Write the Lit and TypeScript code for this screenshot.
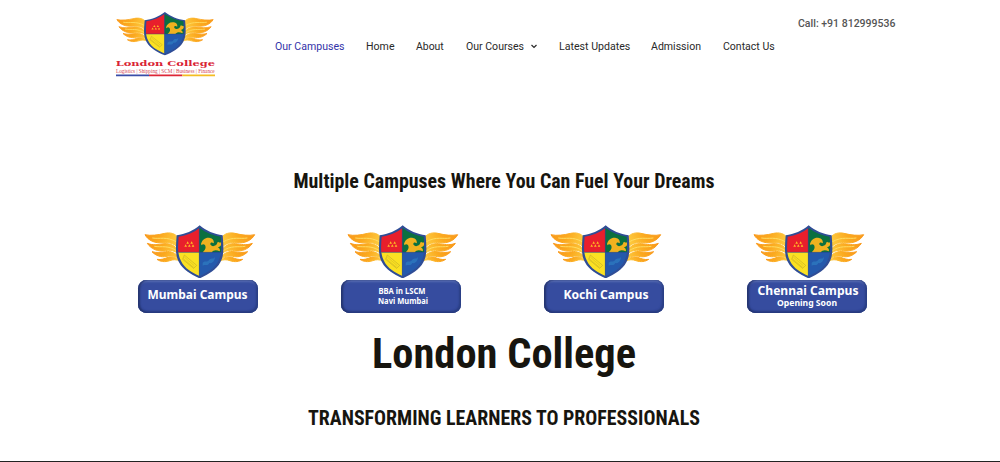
import { LitElement, html, css, svg } from "lit";
import { customElement, property } from "lit/decorators.js";

const wing = svg`
  <g fill="url(#gold)" stroke="url(#gold)" stroke-width="3" stroke-linejoin="round">
    <path d="M45 45 C62 49 84 46 104 41 C120 37 136 42 143 52 L144 84 C132 71 116 67 99 69 C75 72 54 62 45 45Z"/>
    <path d="M52 71 C70 78 86 74 102 72 C120 70 136 79 144 91 L146 104 C135 93 120 90 106 93 C84 97 63 88 52 71Z"/>
    <path d="M66 96 C80 100 93 98 107 96 C122 93 138 101 147 112 L149 119 C138 110 124 107 111 110 C93 114 77 108 66 96Z"/>
    <path d="M81 119 C94 121 103 117 114 113 C128 109 142 115 150 124 C138 119 130 119 119 123 C104 128 91 126 81 119Z"/>
  </g>
  <g fill="none" stroke="#ffdd62" stroke-width="3" stroke-linecap="round">
    <path d="M68 55 C90 59 108 49 139 66"/><path d="M74 80 C96 84 114 75 141 94"/>
  </g>`;

const emblem = svg`
  <defs>
    <linearGradient id="gold" x1="0" x2="1" y1="0" y2="0.2">
      <stop offset="0" stop-color="#f9981a"/><stop offset=".5" stop-color="#fba91f"/><stop offset="1" stop-color="#fdc83c"/>
    </linearGradient>
    <clipPath id="field"><path d="M209 25 C190 39 169 48 146 51 C144 78 141 101 153 124 C164 147 186 159 209 169 C232 159 254 147 265 124 C277 101 274 78 272 51 C249 48 228 39 209 25Z"/></clipPath>
  </defs>
  ${wing}
  <g transform="matrix(-1 0 0 1 419 0)">${wing}</g>
  <path fill="#2f4d96" d="M209 17 C190 33 165 44 140 47 C138 78 134 104 147 128 C159 151 184 165 209 176 C234 165 259 151 271 128 C284 104 280 78 278 47 C253 44 228 33 209 17Z"/>
  <g clip-path="url(#field)">
    <path fill="#e81f2c" d="M135 15H208V98H135Z"/>
    <path fill="#0b7040" d="M208 15H285V98H208Z"/>
    <path fill="#fbe122" d="M135 98H208V180H135Z"/>
    <path fill="#2459ac" d="M208 98H285V180H208Z"/>
    <path fill="#f1b21f" d="M213 73 C216 60 228 52 240 55 C249 57 253 64 251 71 C246 66 240 68 241 74 C243 80 251 81 257 77 C262 74 261 68 264 66 C267 69 272 69 277 68 C275 78 269 82 263 83 C269 86 271 90 269 95 C259 90 250 91 245 98 L218 98 C226 91 229 84 225 76 C221 72 217 73 215 77Z"/>
    <path fill="#ffba24" d="M163 81l4-7 4 7zm11 0l4-7 4 7zm11 0l4-7 4 7zm-16-9l4-7 4 7zm12 0l4-7 4 7z"/>
    <path fill="none" stroke="#b7a12a" stroke-width="1.5" d="M163 106L200 137L191 146L158 119Z"/>
    <path fill="none" stroke="#c1aa27" stroke-width="2.5" stroke-dasharray="2 2" d="M164 113L194 139M161 118L191 143"/>
    <path fill="#2b72bb" d="M218 130C225 119 232 132 239 119C246 113 250 120 255 112C254 124 247 132 238 130C233 141 227 133 218 138Z"/>
    <path fill="none" stroke="#26458b" stroke-width="1.5" d="M208 20V172M140 98H280"/>
  </g>`;

@customElement("college-emblem")
class CollegeEmblem extends LitElement {
  static styles = css`
    :host { display: block; }
    svg { display: block; width: 100%; height: 100%; }
  `;
  render() {
    return html`<svg viewBox="42 16 336 160" aria-hidden="true">${emblem}</svg>`;
  }
}

@customElement("campus-card")
class CampusCard extends LitElement {
  @property() name = "";
  @property() detail = "";
  @property() variant = "";
  static styles = css`
    :host { display: block; width: 120px; }
    college-emblem { width: 112px; height: 53.4px; margin-left: 6px; }
    .plate {
      box-sizing: border-box; width: 120px; height: 33.5px; margin-top: 1.2px;
      border-radius: 8.5px; background: #364c9f;
      box-shadow: inset 2px 0 2px #24346f, inset -2px -1px 2px #2a3f85, inset 0 2px 2px #5a6fb3, inset 0 -2px 2px #2a3d83;
    }
    svg { display: block; }
    text { fill: #fff; font-family: "Noto Sans", "Open Sans", sans-serif; font-weight: 700; text-anchor: middle; }
  `;
  private label(text: string, y: number, size: number, width: number, x = 60) {
    return svg`<text x=${x} y=${y} font-size=${size} textLength=${width} lengthAdjust="spacingAndGlyphs">${text}</text>`;
  }
  private labels() {
    if (this.variant === "pair") return [this.label(this.name, 13.5, 8.3, 47, 61), this.label(this.detail, 24, 8.3, 50, 62)];
    if (this.variant === "soon") return [this.label(this.name, 15, 12.5, 101, 61), this.label(this.detail, 26, 8.8, 60, 60)];
    return this.label(this.name, 19.3, 12.5, this.name.startsWith("M") ? 100 : 85, this.name.startsWith("M") ? 59.5 : 62);
  }
  render() {
    return html`<college-emblem></college-emblem>
      <div class="plate"><svg width="120" height="33">${this.labels()}</svg></div>`;
  }
}

@customElement("app-root")
class AppRoot extends LitElement {
  static styles = css`
    :host { display: block; box-sizing: border-box; height: 462px; overflow: hidden; background: #fff; border-bottom: 1px solid #222; font-family: Roboto, sans-serif; }
    svg { display: block; overflow: visible; }
    header { display: flex; height: 85px; padding-left: 105px; }
    .logo { flex: none; margin-top: 5px; }
    .nav { display: flex; margin-left: 50.4px; padding-top: 38px; }
    .item { flex: none; }
    .call { flex: none; margin-left: 24px; margin-top: 15px; font-weight: 500; }
    .headline { font-family: "Roboto Condensed", Roboto, sans-serif; font-stretch: 75%; font-weight: 700; fill: #17150f; }
    .lead { margin-top: 75px; }
    .campuses { display: flex; gap: 83px; padding: 25px 0 0 138px; }
  `;
  private line(text: string, x: number, y: number, width: number, size: number, height: number) {
    return html`<svg width="1000" height=${height}><text x=${x} y=${y} font-size=${size} textLength=${width} lengthAdjust="spacingAndGlyphs">${text}</text></svg>`;
  }
  private navItem(text: string, width: number, gap: number, current = false) {
    return html`<svg class="item" width=${width + gap} height="16"><text x="0" y="11.8" fill=${current ? "#3333a8" : "#292929"} font-size="10.6" textLength=${width} lengthAdjust="spacingAndGlyphs">${text}</text>
      ${text === "Our Courses" ? svg`<path d="M${width + 7.5} 7l2.5 2.5 2.5-2.5" fill="none" stroke="#292929" stroke-width="1.2"/>` : ""}</svg>`;
  }
  render() {
    return html`
      <header>
        <svg class="logo" width="120" height="80" viewBox="0 0 360 240">
          <svg x="33" y="20" width="295" height="131" viewBox="42 16 336 160" preserveAspectRatio="none">${emblem}</svg>
          <text x="32" y="184" fill="#d92335" font-family="DejaVu Serif" font-weight="700" font-size="24" textLength="298" lengthAdjust="spacingAndGlyphs">London College</text>
          <text x="33" y="203" fill="#d54452" font-family="Liberation Serif" font-size="17" textLength="296" lengthAdjust="spacingAndGlyphs">Logistics | Shipping | SCM | Business | Finance</text>
          <path d="M33 211H132" stroke="#3a4da8" stroke-width="5"/>
          <path d="M132 211H232" stroke="#dd2637" stroke-width="5"/>
          <path d="M232 211H330" stroke="#f4bd22" stroke-width="5"/>
        </svg>
        <nav class="nav">
          ${this.navItem("Our Campuses", 69.5, 21.5, true)}
          ${this.navItem("Home", 28.5, 21.5)}
          ${this.navItem("About", 27.8, 21.7)}
          ${this.navItem("Our Courses", 58, 34.7)}
          ${this.navItem("Latest Updates", 71.3, 21.2)}
          ${this.navItem("Admission", 50, 21.7)}
          ${this.navItem("Contact Us", 51.7, 0)}
        </nav>
        <svg class="call" width="98" height="16"><text x="0" y="11.6" fill="#555" font-size="10.8" textLength="97.5" lengthAdjust="spacingAndGlyphs">Call: +91 812999536</text></svg>
      </header>
      <main>
        <div class="headline lead">${this.line("Multiple Campuses Where You Can Fuel Your Dreams", 293.5, 28, 421, 20, 40)}</div>
        <section class="campuses">
          <campus-card name="Mumbai Campus"></campus-card>
          <campus-card name="BBA in LSCM" detail="Navi Mumbai" variant="pair"></campus-card>
          <campus-card name="Kochi Campus"></campus-card>
          <campus-card name="Chennai Campus" detail="Opening Soon" variant="soon"></campus-card>
        </section>
        <div class="headline">${this.line("London College", 372, 55, 264, 43, 83)}</div>
        <div class="headline">${this.line("TRANSFORMING LEARNERS TO PROFESSIONALS", 308, 29, 392, 20, 50)}</div>
      </main>`;
  }
}
